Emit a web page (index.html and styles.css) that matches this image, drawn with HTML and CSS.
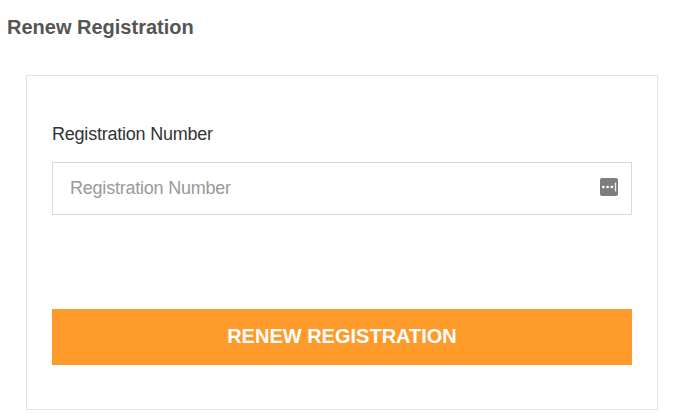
FILE: index.html
```html
<!DOCTYPE html>
<html lang="en">
<head>
<meta charset="utf-8">
<title>Renew Registration</title>
<link rel="stylesheet" href="styles.css">
</head>
<body>
<h1 class="title">Renew Registration</h1>
<form class="panel">
  <label class="label" for="reg">Registration Number</label>
  <div class="field">
    <input class="input" id="reg" type="text" placeholder="Registration Number">
    <svg class="icon" viewBox="0 0 18 18" width="18" height="18" aria-hidden="true">
      <rect width="18" height="18" rx="2" fill="#7d7d7d"/>
      <rect x="2" y="7.7" width="2.5" height="2.5" rx=".8" fill="#fff"/>
      <rect x="6.3" y="7.7" width="2.5" height="2.5" rx=".8" fill="#fff"/>
      <rect x="10.6" y="7.7" width="2.5" height="2.5" rx=".8" fill="#fff"/>
      <rect x="14.8" y="4.5" width="1.4" height="9" rx=".5" fill="#eee"/>
    </svg>
  </div>
  <button class="submit" type="button">RENEW REGISTRATION</button>
</form>
</body>
</html>
```
FILE: styles.css
```css
* { box-sizing: border-box; }
body { margin: 0; background: #fff; font-family: "Liberation Sans", Arial, sans-serif; overflow: hidden; }
.title { margin: 0 0 0 7px; padding-top: 15px; height: 75px; font-size: 20px; line-height: 24px; font-weight: 700; color: #555; }
.panel { margin: 0 20px 0 26px; height: 335px; padding: 47px 25px 0; border: 1px solid #e2e2e2; display: flex; flex-direction: column; }
.label { font-size: 18px; line-height: 22px; letter-spacing: -0.22px; color: #333; }
.field { margin-top: 17px; height: 53px; border: 1px solid #d8d8d8; display: flex; align-items: center; padding: 0 13px 0 17px; }
.input { flex: 1; min-width: 0; border: 0; padding: 0; outline: 0; background: none; font: 18px "Liberation Sans", Arial, sans-serif; letter-spacing: -0.22px; color: #333; }
.input::placeholder { color: #999; opacity: 1; }
.icon { display: block; flex: none; margin-bottom: 3px; }
.submit { margin-top: 94px; height: 56px; border: 0; padding: 0 0 2px; background: #fe9a2a; color: #fff; font: 700 20px "Liberation Sans", Arial, sans-serif; }
```
